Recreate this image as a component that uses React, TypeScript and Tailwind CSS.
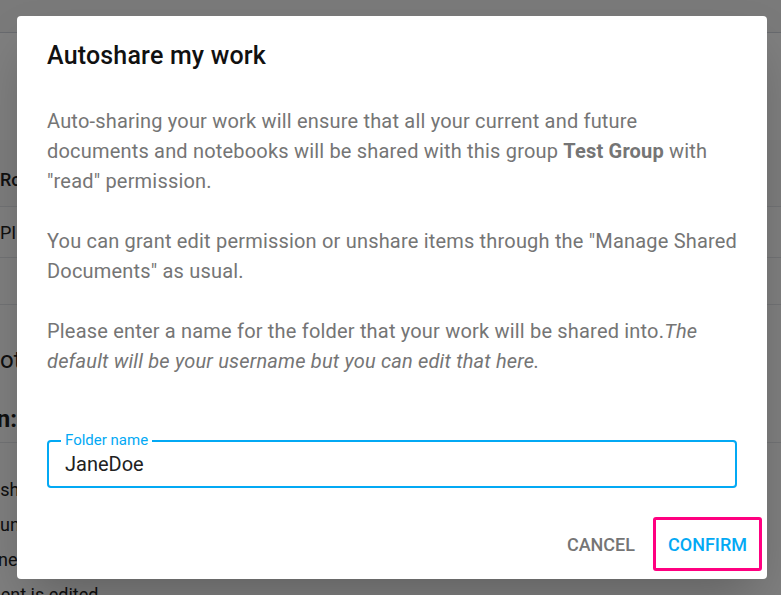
import React from 'react';

const BackgroundPage: React.FC = () => (
  <div className="flex flex-col text-[#212121]">
    <div className="h-[33px] border-b border-gray-300 bg-[#f4f4f4]" />
    <div className="h-[107px]" />
    <div className="h-[67px] flex items-end pb-[13px] border-b border-gray-200 bg-[#fbfbfb]">
      <span className="ml-0 text-[18px] font-medium">Role</span>
    </div>
    <div className="h-[51px] flex items-center border-b border-gray-200">
      <span className="ml-0 text-[18px]">PI</span>
    </div>
    <div className="h-[47px] border-b border-gray-200" />
    <div className="h-[90px] flex items-center pt-[20px]">
      <span className="-ml-[17px] text-[24px]">Notifications</span>
    </div>
    <div className="h-[48px] flex items-center border-b border-gray-200">
      <span className="-ml-[112px] text-[24px] font-bold">Permission:</span>
    </div>
    <div className="pt-[29px] flex flex-col text-[18px] leading-[35px]">
      <span className="-ml-[21px]">Push</span>
      <span className="-ml-[11px]">Run</span>
      <span className="-ml-[24px]">Done</span>
      <span className="-ml-[15px]">ment is edited</span>
    </div>
  </div>
);

export default function App() {
  return (
    <div className="relative h-[595px] w-full overflow-hidden bg-white font-['Roboto',sans-serif]">
      <BackgroundPage />

      {/* modal backdrop */}
      <div className="absolute inset-0 bg-black/50" />

      {/* dialog */}
      <div className="absolute left-[17px] top-[16px] w-[750px] h-[563px] bg-white rounded-[4px] shadow-2xl flex flex-col">
        <h2 className="px-[30px] pt-[24px] text-[25px] leading-[32px] font-medium tracking-[0.0075em] text-[#111]">
          Autoshare my work
        </h2>

        <div className="pl-[30px] pr-[26px] pt-[34px] text-[20px] leading-[30px] tracking-[0.00938em] text-[#757575]">
          <p>
            Auto-sharing your work will ensure that all your current and future
            <br />
            documents and notebooks will be shared with this group <b className="font-bold">Test Group</b> with
            "read" permission.
          </p>
          <p className="mt-[30px]">
            You can grant edit permission or unshare items through the "Manage Shared Documents" as usual.
          </p>
          <p className="mt-[30px]">
            Please enter a name for the folder that your work will be shared into.
            <i>The default will be your username but you can edit that here.</i>
          </p>
        </div>

        <div className="px-[30px] pt-[64px]">
          <div className="relative h-[48px] rounded-[4px] border-2 border-[#03a9f4] flex items-center px-[16px]">
            <span className="absolute -top-[11px] left-[12px] bg-white px-[4px] text-[15px] leading-[18px] text-[#03a9f4]">
              Folder name
            </span>
            <span className="text-[20px] text-[#212121]">JaneDoe</span>
          </div>
        </div>

        <div className="mt-auto flex items-center justify-end gap-[10px] pr-[5px] pb-[8px]">
          <button className="h-[36px] px-[8px] text-[18px] font-medium uppercase text-[#757575]">
            Cancel
          </button>
          <div className="h-[54px] flex items-center px-[12px] border-[3px] border-[#ff0080] rounded-[3px]">
            <button className="text-[18px] font-medium uppercase text-[#03a9f4]">Confirm</button>
          </div>
        </div>
      </div>
    </div>
  );
}
